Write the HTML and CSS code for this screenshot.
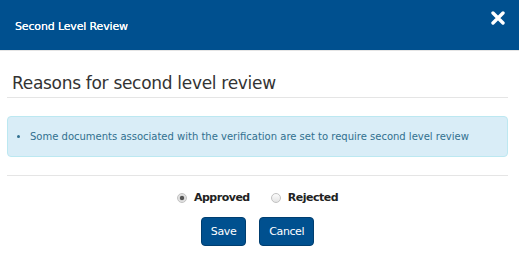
FILE: index.html
```html
<!DOCTYPE html>
<html lang="en">
<head>
    <meta charset="UTF-8">
    <title>Second Level Review</title>
    <link rel="stylesheet" href="styles.css">
</head>
<body>

    <div class="modal-header">
        <span class="modal-title">Second Level Review</span>
        <svg class="close-icon" width="14" height="14" viewBox="0 0 14 14">
            <path d="M2 2 L12 12 M12 2 L2 12" stroke="#ffffff" stroke-width="3.4" stroke-linecap="round"/>
        </svg>
    </div>

    <div class="modal-body">
        <h3 class="section-title">Reasons for second level review</h3>

        <div class="alert-info">
            <ul>
                <li>Some documents associated with the verification are set to require second level review</li>
            </ul>
        </div>

        <div class="modal-footer">
            <div class="choices">
                <label class="choice"><input type="radio" name="decision" checked> Approved</label>
                <label class="choice"><input type="radio" name="decision"> Rejected</label>
            </div>
            <div class="actions">
                <button type="button" class="btn">Save</button>
                <button type="button" class="btn">Cancel</button>
            </div>
        </div>
    </div>

</body>
</html>
```

FILE: styles.css
```css
body {
    font-family: 'DejaVu Sans', Verdana, sans-serif;
    background-color: #ffffff;
    margin: 0;
    padding: 0;
}

.modal-header {
    background-color: #00508f;
    height: 50px;
    display: flex;
    align-items: center;
    justify-content: space-between;
    padding: 0 14px 0 15px;
    border-bottom: 1px solid #e5e5e5;
}

.modal-title {
    color: #ffffff;
    font-size: 11px;
    letter-spacing: -0.15px;
    margin-top: 2px;
    text-shadow: 0 0 0.3px #ffffff;
}

.close-icon {
    margin-top: -14px;
}

.modal-body {
    padding: 0 11px 0 7px;
}

.section-title {
    font-size: 17px;
    font-weight: normal;
    color: #333333;
    margin: 22px 0 0 0;
    padding: 0 0 4px 5px;
    border-bottom: 1px solid #e5e5e5;
    letter-spacing: -0.3px;
}

.alert-info {
    background-color: #d9edf7;
    border: 1px solid #bce8f1;
    border-radius: 4px;
    color: #31708f;
    font-size: 10px;
    margin-top: 18px;
    padding: 14px 10px;
}

.alert-info ul {
    margin: 0;
    padding-left: 12px;
}

.modal-footer {
    border-top: 1px solid #e5e5e5;
    margin-top: 18px;
    padding-top: 15px;
    text-align: center;
}

.choices {
    display: flex;
    justify-content: center;
    gap: 21px;
    font-size: 11px;
    font-weight: bold;
    color: #222222;
    letter-spacing: -0.5px;
}

.choice {
    display: flex;
    align-items: center;
    gap: 7px;
}

.choice input {
    appearance: none;
    -webkit-appearance: none;
    margin: 0;
    width: 10px;
    height: 10px;
    border: 1px solid #c2c2c2;
    border-radius: 50%;
    background: linear-gradient(#fcfcfc, #e4e4e4);
}

.choice input:checked {
    background: radial-gradient(circle, #555555 0, #555555 1.8px, #dcdcdc 2.6px, #eeeeee 100%);
}

.actions {
    display: flex;
    justify-content: center;
    gap: 13px;
    margin-top: 13px;
}

.btn {
    background-color: #00508f;
    color: #ffffff;
    border: 1px solid #003e70;
    border-radius: 4px;
    font-family: 'DejaVu Sans', Verdana, sans-serif;
    font-size: 11px;
    letter-spacing: -0.4px;
    height: 29px;
    padding: 0 9px;
    cursor: pointer;
}
```
